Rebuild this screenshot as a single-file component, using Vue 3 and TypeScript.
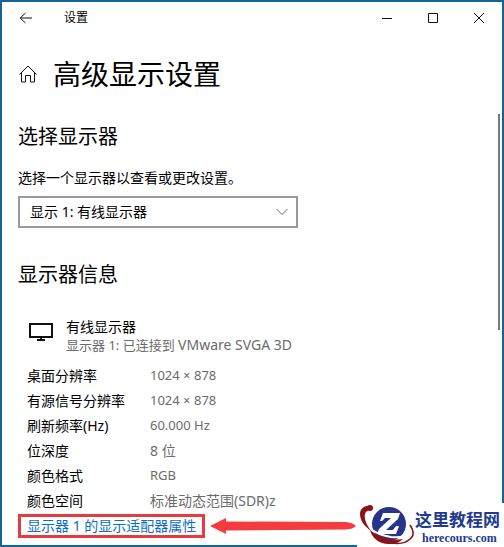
<script setup lang="ts">
import { ref } from 'vue'

interface InfoRow {
  label: string
  value: string
  cjk?: boolean
}

const display = ref('1')
const rows: InfoRow[] = [
  { label: '桌面分辨率', value: '1024 × 878' },
  { label: '有源信号分辨率', value: '1024 × 878' },
  { label: '刷新频率(Hz)', value: '60.000 Hz' },
  { label: '位深度', value: '8 位', cjk: true },
  { label: '颜色格式', value: 'RGB' },
  { label: '颜色空间', value: '标准动态范围(SDR)z', cjk: true },
]
</script>

<template>
  <div class="window">
    <header class="titlebar">
      <button class="back" type="button" aria-label="返回">
        <svg width="14" height="12" viewBox="0 0 14 12"><path d="M6.500 1 1.200 6l5.300 5M1.200 6H13" /></svg>
      </button>
      <span class="app-name">设置</span>
      <div class="controls">
        <button type="button" aria-label="最小化">
          <svg width="12" height="12" viewBox="0 0 12 12"><path d="M1 6.500h10" /></svg>
        </button>
        <button type="button" aria-label="最大化">
          <svg width="12" height="12" viewBox="0 0 12 12"><path d="M1.500 1.500h9v9h-9z" /></svg>
        </button>
        <button type="button" aria-label="关闭">
          <svg width="12" height="12" viewBox="0 0 12 12"><path d="m1 1 10 10M11 1 1 11" /></svg>
        </button>
      </div>
    </header>

    <main class="content">
      <div class="page-title">
        <svg width="20" height="20" viewBox="0 0 20 20">
          <path d="M1.500 10.500 10 2l8.500 8.500M3.500 8.800v9.200h4v-6.500h5v6.500h4V8.800" />
        </svg>
        <h1>高级显示设置</h1>
      </div>

      <section>
        <h2>选择显示器</h2>
        <label class="prompt" for="display">选择一个显示器以查看或更改设置。</label>
        <div class="select-box">
          <select id="display" v-model="display">
            <option value="1">显示 1: 有线显示器</option>
          </select>
          <svg class="chevron" width="14" height="8" viewBox="0 0 14 8"><path d="m1.500 1 5.500 5.500L12.500 1" /></svg>
        </div>
      </section>

      <section class="info">
        <h2>显示器信息</h2>
        <div class="device">
          <svg width="24" height="18" viewBox="0 0 24 18">
            <path d="M1 1h22v13H1zM12 14v3M8 17h8" />
          </svg>
          <div>
            <p class="device-name">有线显示器</p>
            <p class="device-note">显示器 1: 已连接到 <span>VMware SVGA 3D</span></p>
          </div>
        </div>
        <dl>
          <div v-for="row in rows" :key="row.label" class="fact">
            <dt>{{ row.label }}</dt>
            <dd :class="{ cjk: row.cjk }">{{ row.value }}</dd>
          </div>
        </dl>
        <div class="link-row">
          <a class="adapter" href="#adapter">显示器 1 的显示适配器属性</a>
          <svg class="arrow" width="146" height="18" viewBox="0 0 146 18" aria-hidden="true">
            <path d="M0 9 16 1v3.500L136 5q8 1 10 4-3 3-10 3.500L16 13.500V17z" />
          </svg>
        </div>
      </section>
    </main>
    <div class="scrollbar"></div>

    <aside class="brand">
      <svg width="58" height="44" viewBox="0 0 58 44" aria-hidden="true">
        <circle cx="32" cy="21" r="17" fill="#27348b" />
        <path d="M6 17c5 9 15 15 28 17 8 1 14 0 18-4" fill="none" stroke="#fff" stroke-width="2" />
        <path d="M15 3C8 2 3 5 3 11c0 6 4 12 11 17C9 21 7 15 8 11c1-3 3-4 6-4z" fill="#8c1218" />
        <circle cx="13" cy="5" r="3" fill="#8c1218" />
        <path d="M13 27c2 8 9 14 19 14 6 0 11-2 14-5-12 2-23-1-33-9z" fill="#8c1218" />
        <path d="M53 22c4 6 4 11 0 14-4 4-11 5-18 4" fill="none" stroke="#8c1218" stroke-width="1.500" />
        <path d="M26 10h17l-2 6-12 11h7l3-4h3l-3 8H20l2-5 12-11h-6l-3 3h-2z" fill="#fff" />
      </svg>
      <div class="brand-text">
        <strong>这里教程网</strong>
        <span>herecours.com</span>
      </div>
    </aside>
  </div>
</template>

<style>
body {
  background: #fff;
}
</style>

<style scoped>
* {
  box-sizing: border-box;
}
.window {
  position: relative;
  min-height: 100vh;
  border: 2px solid #14649c;
  background: #fff;
  color: #000;
  font-family: "Noto Sans", "Noto Sans CJK SC", sans-serif;
  font-size: 14px;
  line-height: 20px;
}
svg {
  display: block;
  flex: none;
  fill: none;
  stroke: #111;
}
h1,
h2,
p,
dl,
dd {
  margin: 0;
  font-weight: 400;
}
button {
  display: grid;
  place-items: center;
  border: 0;
  padding: 0;
  background: none;
}
.titlebar {
  display: flex;
  align-items: center;
  height: 32px;
}
.back {
  width: 48px;
  height: 32px;
}
.app-name {
  margin-left: 14px;
  font-size: 12px;
}
.controls {
  display: flex;
  margin-left: auto;
}
.controls button {
  width: 46px;
  height: 32px;
}
.content {
  padding: 0 16px;
}
.page-title {
  display: flex;
  align-items: center;
  gap: 15px;
  height: 80px;
}
h1 {
  font-size: 28px;
  line-height: 40px;
}
h2 {
  padding-top: 8px;
  font-size: 20px;
  line-height: 30px;
}
.prompt {
  display: block;
  margin: 16px 0 8px;
}
.select-box {
  display: grid;
  align-items: center;
  width: 280px;
  max-width: 100%;
}
.select-box > * {
  grid-area: 1 / 1;
}
select {
  appearance: none;
  width: 100%;
  height: 32px;
  border: 2px solid #999;
  border-radius: 0;
  padding: 0 10px;
  background: #fff;
  color: #000;
  font: inherit;
}
.chevron {
  justify-self: end;
  margin-right: 9px;
  stroke: #666;
  pointer-events: none;
}
.info {
  padding-top: 24px;
}
.device {
  display: flex;
  align-items: flex-start;
  gap: 13px;
  padding: 28px 0 9px 11px;
}
.device svg {
  margin-top: 5px;
  stroke-width: 2;
}
.device p {
  height: 18px;
  line-height: 18px;
}
.device .device-note {
  color: #6b6b6b;
  font-size: 13px;
}
.device-note span {
  font-size: 14px;
}
.fact {
  display: grid;
  grid-template-columns: 123px 1fr;
  height: 25px;
  padding-left: 9px;
  line-height: 25px;
}
dd {
  color: #6b6b6b;
  font-size: 13px;
}
.cjk {
  font-size: 14px;
}
.link-row {
  display: flex;
  align-items: center;
  gap: 5px;
  padding-top: 1px;
}
.adapter {
  flex: none;
  border: 3px solid #e93a3e;
  padding: 0 6px;
  line-height: 18px;
  color: #0a6fc4;
  text-decoration: none;
}
.arrow {
  fill: #f43b3e;
  stroke: none;
}
.scrollbar {
  position: absolute;
  top: 112px;
  right: 2px;
  width: 2px;
  height: 216px;
  background: #7a7a7a;
}
.brand {
  position: absolute;
  right: -2px;
  bottom: -2px;
  display: flex;
  align-items: center;
  width: 147px;
  height: 44px;
  background: #fff;
  color: #213a8f;
}
.brand svg {
  stroke: none;
}
.brand-text {
  display: grid;
  white-space: nowrap;
}
.brand strong {
  font-family: "Noto Sans CJK SC", sans-serif;
  font-size: 17px;
  line-height: 25px;
}
.brand span {
  padding-left: 7px;
  font-family: "Liberation Serif", serif;
  font-size: 12px;
  font-weight: 700;
  line-height: 14px;
}
</style>
